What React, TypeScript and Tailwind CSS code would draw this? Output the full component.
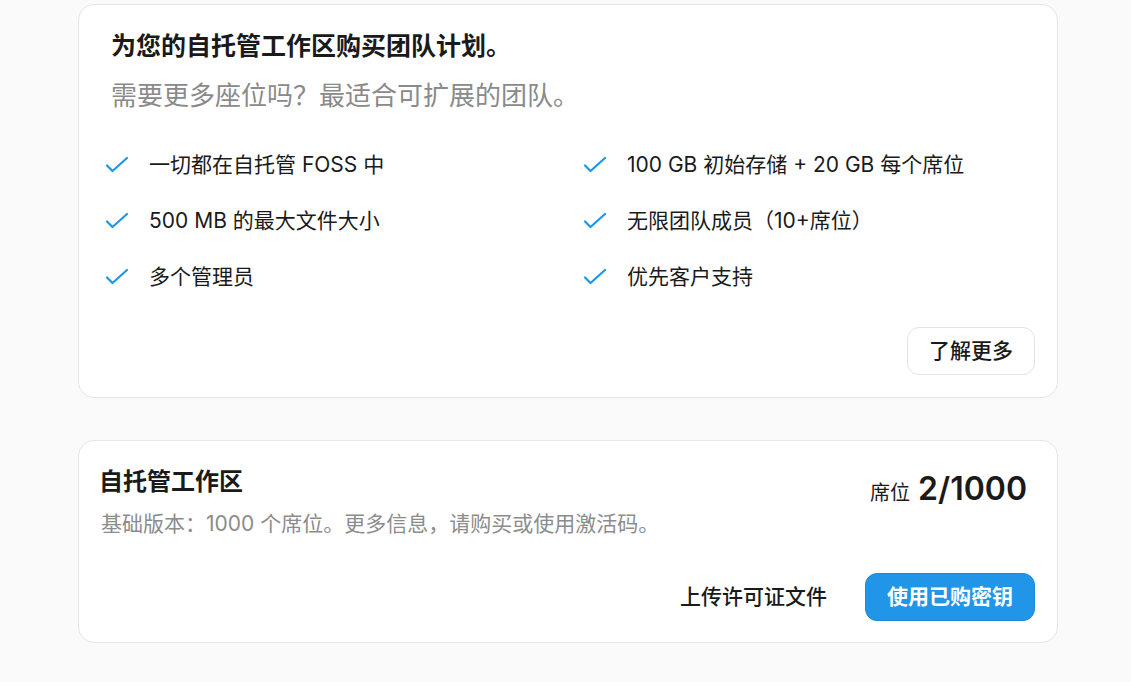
import React from "react";

const features = [
  "一切都在自托管 FOSS 中",
  "100 GB 初始存储 + 20 GB 每个席位",
  "500 MB 的最大文件大小",
  "无限团队成员（10+席位）",
  "多个管理员",
  "优先客户支持",
];

function Check() {
  return (
    <svg width="24" height="24" viewBox="0 0 24 24" fill="none" stroke="#1f95e8" strokeWidth="2.2" strokeLinecap="round" strokeLinejoin="round" className="shrink-0">
      <polyline points="2 12.5 7.5 18 22 5" />
    </svg>
  );
}

export default function App() {
  return (
    <div
      className="min-h-screen bg-[#fafafa] pt-1 text-[#1a1a1a]"
      style={{ fontFamily: 'Inter, "Noto Sans CJK SC", sans-serif' }}
    >
      <div className="ml-[78px] w-[980px] space-y-[42px]">
        {/* Team plan */}
        <div className="rounded-2xl border border-[#e6e6e6] bg-white pl-6 pr-[22px] pt-[24px] pb-[22px]">
          <h2 className="px-2 text-[25px] font-bold leading-[34px]">为您的自托管工作区购买团队计划。</h2>
          <p className="mt-[16px] px-2 text-[26px] leading-[34px] text-[#8a8a8a]">需要更多座位吗？最适合可扩展的团队。</p>
          <div className="mt-[35px] grid grid-cols-[478px_1fr] gap-y-[22px]">
            {features.map((f) => (
              <div key={f} className="flex items-center gap-5 pl-[2px]">
                <Check />
                <span className="text-[21px] leading-[34px]">{f}</span>
              </div>
            ))}
          </div>
          <div className="mt-[33px] flex justify-end">
            <button className="h-12 rounded-xl border border-[#e3e3e3] bg-white px-[21px] text-[21px] font-medium">
              了解更多
            </button>
          </div>
        </div>

        {/* Self-hosted workspace */}
        <div className="rounded-2xl border border-[#e6e6e6] bg-white px-[22px] pt-[24px] pb-[21px]">
          <div className="flex items-start justify-between">
            <div>
              <h3 className="-ml-[2px] text-[24px] font-bold leading-[34px]">自托管工作区</h3>
              <p className="mt-[10px] text-[21px] leading-[30px] text-[#8c8c8c]">基础版本：1000 个席位。更多信息，请购买或使用激活码。</p>
            </div>
            <div className="mr-2 flex items-baseline gap-2">
              <span className="text-[20px]">席位</span>
              <span className="text-[32px] font-semibold">2/1000</span>
            </div>
          </div>
          <div className="mt-[34px] flex items-center justify-end gap-[18px]">
            <button className="h-12 px-5 text-[21px] font-medium">上传许可证文件</button>
            <button className="h-12 rounded-xl border border-[#1c8ad8] bg-[#2196e9] px-[21px] text-[21px] font-semibold text-white">
              使用已购密钥
            </button>
          </div>
        </div>
      </div>
    </div>
  );
}
